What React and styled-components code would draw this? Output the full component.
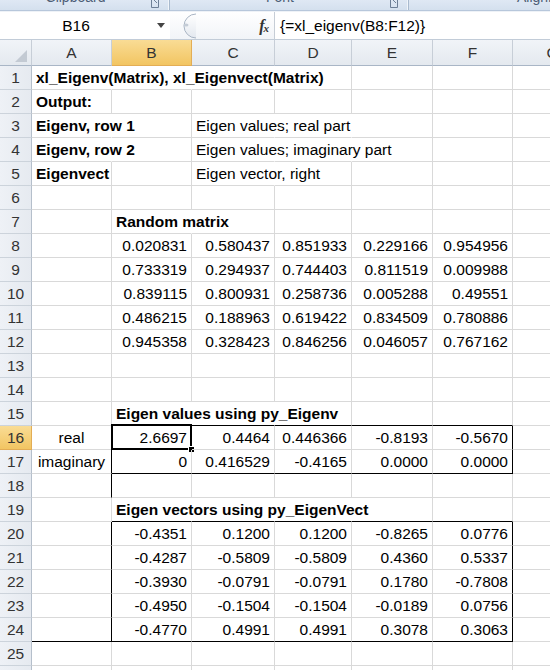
import React from "react";
import styled, { createGlobalStyle } from "styled-components";

const GRID = "#d9d9d9";
const BLACK = "#000";
const COLS = ["A", "B", "C", "D", "E", "F", "G"];
// G is a full-width column that runs past the window edge
const TEMPLATE = "32px 80px 80px 83px 77px 81px 80px 80px";

const GlobalStyle = createGlobalStyle`
  html, body {
    margin: 0;
    padding: 0;
    background: #fff;
    overflow: hidden;
  }
  body {
    font-family: "Liberation Sans", Arial, sans-serif;
  }
`;

const Window = styled.div`
  width: 550px;
  height: 670px;
  overflow: hidden;
  display: flex;
  flex-direction: column;
  background: #fff;
`;

/* ribbon group labels, only the bottom sliver shows */
const Ribbon = styled.div`
  height: 11px;
  flex: none;
  box-sizing: border-box;
  display: flex;
  overflow: hidden;
  background: linear-gradient(#dfe8f4, #d4e0ee);
  border-bottom: 1px solid #b7c7db;
`;
const Group = styled.div`
  width: ${(p) => (p.$w ? `${p.$w}px` : "auto")};
  flex: ${(p) => (p.$w ? "none" : "1")};
  display: flex;
  box-sizing: border-box;
  border-right: ${(p) => (p.$w ? "1px solid #a9bace" : "none")};
  box-shadow: ${(p) => (p.$w ? "inset -1px 0 0 #f1f5fa" : "none")};
`;
const GroupLabel = styled.div`
  flex: 1;
  text-align: ${(p) => p.$align || "center"};
  padding-left: ${(p) => p.$pad || 0}px;
  font-size: 14px;
  line-height: 14px;
  margin-top: -10px;
  color: #4d5e76;
  white-space: nowrap;
`;
const Launcher = styled.svg`
  flex: none;
  width: 8px;
  height: 8px;
  margin: 0 10px 0 0;
`;

const FormulaBar = styled.div`
  height: 29px;
  flex: none;
  box-sizing: border-box;
  display: flex;
  background: #fff;
  border-top: 1px solid #eef2f7;
  border-bottom: 1px solid #c2ccd8;
`;
const NameBox = styled.div`
  width: 170px;
  flex: none;
  display: flex;
  align-items: center;
`;
const NameText = styled.div`
  flex: 1;
  text-align: center;
  font-size: 15.5px;
  color: #000;
`;
const Arrow = styled.svg`
  flex: none;
  width: 8px;
  height: 5px;
  margin: 0 5px 0 5px;
`;
const Middle = styled.div`
  width: 105px;
  flex: none;
  box-sizing: border-box;
  display: flex;
  align-items: center;
  justify-content: space-between;
  padding: 0 6px 0 4px;
  background: linear-gradient(#ffffff, #f1f4f8);
  border-right: 1px solid #c6cdd6;
`;
const Fx = styled.span`
  font-family: "Liberation Serif", "Times New Roman", serif;
  font-style: italic;
  font-weight: 700;
  font-size: 16px;
  color: #333;
  letter-spacing: -1px;
  sub {
    font-size: 11px;
    vertical-align: -1px;
  }
`;
const FormulaText = styled.div`
  flex: 1;
  display: flex;
  align-items: center;
  padding-left: 5px;
  font-size: 15.5px;
  color: #000;
  white-space: nowrap;
`;

const Sheet = styled.div`
  flex: 1;
  display: flex;
  flex-direction: column;
  overflow: hidden;
`;
const HeaderRow = styled.div`
  display: grid;
  grid-template-columns: ${TEMPLATE};
  height: 26px;
  flex: none;
`;
const ColHead = styled.div`
  position: relative;
  box-sizing: border-box;
  text-align: center;
  line-height: 25px;
  font-size: 15.5px;
  color: #333;
  background: ${(p) =>
    p.$active ? "linear-gradient(#f9dc95, #f2c562)" : "linear-gradient(#f1f4f8, #e4e9ef)"};
  border-right: 1px solid ${(p) => (p.$active ? "#e3ad55" : "#c7ced7")};
  border-bottom: 1px solid ${(p) => (p.$active ? "#e3ad55" : "#a9b6c6")};
`;
const Corner = styled(ColHead)`
  &::after {
    content: "";
    position: absolute;
    right: 4px;
    bottom: 3px;
    border-style: solid;
    border-width: 0 0 12px 12px;
    border-color: transparent transparent #c3cad3 transparent;
  }
`;
const Row = styled.div`
  display: grid;
  grid-template-columns: ${TEMPLATE};
  height: 24px;
  flex: none;
`;
const RowHead = styled.div`
  box-sizing: border-box;
  text-align: center;
  line-height: 23px;
  font-size: 15.5px;
  color: #333;
  background: ${(p) =>
    p.$active ? "linear-gradient(#f9dc95, #f2c562)" : "linear-gradient(90deg, #eef1f6, #e6eaf0)"};
  border-right: 1px solid ${(p) => (p.$active ? "#e3ad55" : "#b5bfcb")};
  border-bottom: 1px solid ${(p) => (p.$active ? "#e3ad55" : "#ccd3db")};
`;
const Cell = styled.div`
  position: relative;
  box-sizing: border-box;
  height: 24px;
  padding: 0 4px;
  line-height: 23px;
  white-space: nowrap;
  font-size: 15.5px;
  color: #000;
  font-weight: ${(p) => (p.$bold ? 700 : 400)};
  text-align: ${(p) => p.$align};
  border-right: 1px solid ${(p) => p.$right};
  border-bottom: 1px solid ${(p) => p.$bottom};
`;
const ActiveFrame = styled.div`
  position: absolute;
  left: -1px;
  top: -2px;
  right: -1px;
  bottom: -1px;
  border: 2px solid #000;
  pointer-events: none;
`;
const FillHandle = styled.div`
  position: absolute;
  right: -5px;
  bottom: -5px;
  width: 5px;
  height: 5px;
  background: #000;
  border: 1px solid #fff;
`;

const text = {
  A1: { v: "xl_Eigenv(Matrix), xl_Eigenvect(Matrix)", bold: true },
  A2: { v: "Output:", bold: true },
  A3: { v: "Eigenv, row 1", bold: true },
  C3: { v: "Eigen values; real part" },
  A4: { v: "Eigenv, row 2", bold: true },
  C4: { v: "Eigen values; imaginary part" },
  A5: { v: "Eigenvect", bold: true },
  C5: { v: "Eigen vector, right" },
  B7: { v: "Random matrix", bold: true },
  B15: { v: "Eigen values using py_Eigenv", bold: true },
  A16: { v: "real", align: "center" },
  A17: { v: "imaginary", align: "center" },
  B19: { v: "Eigen vectors using py_EigenVect", bold: true },
};

const numbers = {
  8: ["0.020831", "0.580437", "0.851933", "0.229166", "0.954956"],
  9: ["0.733319", "0.294937", "0.744403", "0.811519", "0.009988"],
  10: ["0.839115", "0.800931", "0.258736", "0.005288", "0.49551"],
  11: ["0.486215", "0.188963", "0.619422", "0.834509", "0.780886"],
  12: ["0.945358", "0.328423", "0.846256", "0.046057", "0.767162"],
  16: ["2.6697", "0.4464", "0.446366", "-0.8193", "-0.5670"],
  17: ["0", "0.416529", "-0.4165", "0.0000", "0.0000"],
  20: ["-0.4351", "0.1200", "0.1200", "-0.8265", "0.0776"],
  21: ["-0.4287", "-0.5809", "-0.5809", "0.4360", "0.5337"],
  22: ["-0.3930", "-0.0791", "-0.0791", "0.1780", "-0.7808"],
  23: ["-0.4950", "-0.1504", "-0.1504", "-0.0189", "0.0756"],
  24: ["-0.4770", "0.4991", "0.4991", "0.3078", "0.3063"],
};

// gridlines hidden where text spills over
const spill = new Set(["A1", "B1", "C1", "A3", "A4", "C3", "D3", "C4", "D4", "C5", "B7", "B15", "C15", "B19", "C19", "D19"]);
const blackRight = new Set(["A16", "A17", "A18", "A20", "A21", "A22", "A23", "A24", "F16", "F17", "F20", "F21", "F22", "F23", "F24"]);
const blackBottom = new Set([
  "B15", "C15", "D15", "E15", "F15",
  "B17", "C17", "D17", "E17", "F17",
  "B19", "C19", "D19", "E19", "F19",
  "A24", "B24", "C24", "D24", "E24", "F24",
]);

const ACTIVE = "B16";

const cellFor = (col, row) => {
  const id = `${col}${row}`;
  const idx = COLS.indexOf(col);
  let content = text[id];
  if (!content && numbers[row] && idx >= 1 && idx <= 5) {
    content = { v: numbers[row][idx - 1], align: "right" };
  }
  const right = blackRight.has(id) ? BLACK : spill.has(id) ? "transparent" : GRID;
  const bottom = blackBottom.has(id) ? BLACK : GRID;
  return (
    <Cell
      key={id}
      $bold={content && content.bold}
      $align={(content && content.align) || "left"}
      $right={right}
      $bottom={bottom}
    >
      {content ? content.v : ""}
      {id === ACTIVE && (
        <ActiveFrame>
          <FillHandle />
        </ActiveFrame>
      )}
    </Cell>
  );
};

const rows = Array.from({ length: 26 }, (_, i) => i + 1);

const App = () => {
  return (
    <Window>
      <GlobalStyle />
      <Ribbon>
        <Group $w={170}>
          <GroupLabel>Clipboard</GroupLabel>
          <Launcher viewBox="0 0 8 8">
            <path d="M0.5 0 V7.5 H7.5 V0" fill="none" stroke="#6d7f96" />
            <path d="M3 0 L6 3" stroke="#6d7f96" />
          </Launcher>
        </Group>
        <Group $w={239}>
          <GroupLabel>Font</GroupLabel>
          <Launcher viewBox="0 0 8 8">
            <path d="M0.5 0 V7.5 H7.5 V0" fill="none" stroke="#6d7f96" />
            <path d="M3 0 L6 3" stroke="#6d7f96" />
          </Launcher>
        </Group>
        <Group>
          <GroupLabel $align="left" $pad={108}>Alignment</GroupLabel>
        </Group>
      </Ribbon>

      <FormulaBar>
        <NameBox>
          <NameText>B16</NameText>
          <Arrow viewBox="0 0 8 5">
            <path d="M0 0 H8 L4 5 Z" fill="#444" />
          </Arrow>
        </NameBox>
        <Middle>
          <svg width="24" height="26" viewBox="0 0 24 26">
            <defs>
              <linearGradient id="knob" x1="0" y1="0" x2="0" y2="1">
                <stop offset="0" stopColor="#ffffff" />
                <stop offset="1" stopColor="#e3e8ef" />
              </linearGradient>
            </defs>
            <path d="M22 1 A12 12 0 0 0 22 25" fill="url(#knob)" stroke="#a9b5c4" />
            <ellipse cx="12" cy="12" rx="2.5" ry="1.5" fill="#c4ccd6" />
          </svg>
          <Fx>
            f<sub>x</sub>
          </Fx>
        </Middle>
        <FormulaText>{"{=xl_eigenv(B8:F12)}"}</FormulaText>
      </FormulaBar>

      <Sheet>
        <HeaderRow>
          <Corner />
          {COLS.map((c) => (
            <ColHead key={c} $active={c === "B"}>
              {c}
            </ColHead>
          ))}
        </HeaderRow>
        {rows.map((r) => (
          <Row key={r}>
            <RowHead $active={r === 16}>{r}</RowHead>
            {COLS.map((c) => cellFor(c, r))}
          </Row>
        ))}
      </Sheet>
    </Window>
  );
};

export default App;
